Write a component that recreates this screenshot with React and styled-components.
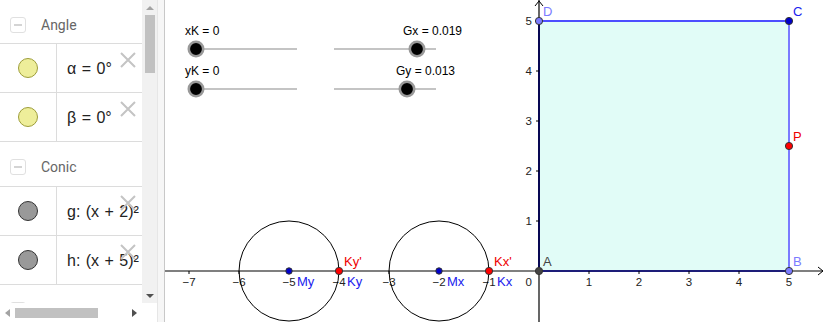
import React from 'react';
import styled, { createGlobalStyle } from 'styled-components';

const GlobalStyle = createGlobalStyle`
  html, body {
    margin: 0;
    padding: 0;
    background: #fff;
    overflow: hidden;
  }
  body {
    font-family: 'Liberation Sans', Arial, sans-serif;
  }
`;

const AppFrame = styled.div`
  display: flex;
  width: 823px;
  height: 322px;
  overflow: hidden;
  background: #fff;
`;

const AlgebraPane = styled.div`
  display: flex;
  flex-direction: column;
  width: 157px;
  height: 322px;
  flex-shrink: 0;
`;

const AlgebraBody = styled.div`
  display: flex;
  height: 303px;
`;

const ItemList = styled.div`
  width: 142px;
  height: 303px;
  overflow: hidden;
`;

const GroupHeader = styled.div`
  display: flex;
  align-items: center;
  gap: 15px;
  height: ${({ h }) => h}px;
  padding-left: 10px;
  box-sizing: border-box;
  border-bottom: 1px solid #dcdcdc;
  color: #666;
  font-family: Roboto, 'Liberation Sans', sans-serif;
  font-size: 14px;
  padding-top: 6px;
`;

const CollapseBox = styled.span`
  display: flex;
  align-items: center;
  justify-content: center;
  width: 14px;
  height: 14px;
  border: 1px solid #e0e0e0;
  border-radius: 3px;

  &::after {
    content: '';
    width: 8px;
    height: 2px;
    background: #d4d4d4;
  }
`;

const ItemRow = styled.div`
  position: relative;
  display: flex;
  height: 49px;
  box-sizing: border-box;
  border-bottom: 1px solid #dcdcdc;
`;

const MarbleCell = styled.div`
  display: flex;
  align-items: center;
  justify-content: center;
  width: 56px;
  flex-shrink: 0;
  border-right: 1px solid #dcdcdc;
`;

const Marble = styled.span`
  width: 18px;
  height: 18px;
  border-radius: 50%;
  background: ${({ fill }) => fill};
  border: 1px solid ${({ edge }) => edge};
`;

const Formula = styled.div`
  flex: 1;
  min-width: 0;
  overflow: hidden;
  display: flex;
  align-items: center;
  padding-left: 10px;
  padding-top: 2px;
  font-family: 'Liberation Sans', Arial, sans-serif;
  font-size: 16px;
  word-spacing: 1px;
  color: #222;
  white-space: nowrap;
`;

const DeleteIcon = styled.svg`
  position: absolute;
  top: 8px;
  right: 6px;
  width: 16px;
  height: 16px;
`;

const VScroll = styled.div`
  display: flex;
  flex-direction: column;
  align-items: center;
  width: 15px;
  background: #f1f1f1;
`;

const Arrow = styled.span`
  width: 0;
  height: 0;
  border-left: ${({ dir }) => (dir === 'up' || dir === 'down' ? '4px solid transparent' : dir === 'right' ? '5px solid #505050' : 'none')};
  border-right: ${({ dir }) => (dir === 'up' || dir === 'down' ? '4px solid transparent' : dir === 'left' ? '5px solid #a3a3a3' : 'none')};
  border-top: ${({ dir }) => (dir === 'left' || dir === 'right' ? '4px solid transparent' : dir === 'down' ? '4px solid #505050' : 'none')};
  border-bottom: ${({ dir }) => (dir === 'left' || dir === 'right' ? '4px solid transparent' : dir === 'up' ? '4px solid #a3a3a3' : 'none')};
`;

const ArrowSlot = styled.div`
  display: flex;
  align-items: center;
  justify-content: center;
  width: 15px;
  height: 15px;
  flex-shrink: 0;
`;

const VThumb = styled.div`
  width: 10px;
  height: 58px;
  background: #c1c1c1;
`;

const VTrack = styled.div`
  flex: 1;
`;

const HScroll = styled.div`
  display: flex;
  align-items: center;
  height: 19px;
  width: 142px;
  background: #fff;
`;

const HThumb = styled.div`
  width: 83px;
  height: 10px;
  background: #c1c1c1;
`;

const HTrack = styled.div`
  flex: 1;
`;

const Divider = styled.div`
  width: 6px;
  flex-shrink: 0;
  background: #f6f6f6;
  border-left: 1px solid #e6e6e6;
  border-right: 1px solid #c8c8c8;
`;

const GraphicsView = styled.div`
  flex: 1;
  height: 322px;
  overflow: hidden;
`;

const groups = [
  {
    name: 'Angle',
    h: 44,
    items: [
      { label: 'α = 0°', fill: '#eeee9a', edge: '#9d9d3a' },
      { label: 'β = 0°', fill: '#eeee9a', edge: '#9d9d3a' },
    ],
  },
  {
    name: 'Conic',
    h: 45,
    items: [
      { label: 'g: (x + 2)² + y² = 1', fill: '#999', edge: '#333' },
      { label: 'h: (x + 5)² + y² = 1', fill: '#999', edge: '#333' },
    ],
  },
  { name: 'Point', h: 45, items: [] },
];

const X0 = 538;
const Y0 = 271;
const U = 50;
const px = (u) => X0 + u * U;
const py = (v) => Y0 - v * U;

const Slider = ({ x1, x2, y, knob, label, lx }) => (
  <g>
    <text x={lx} y={y - 14} fontSize="12" fill="#000">{label}</text>
    <line x1={x1} x2={x2} y1={y} y2={y} stroke="#8a8a8a" strokeWidth="1.2" />
    <circle cx={knob} cy={y} r="7.2" fill="#000" stroke="#999" strokeWidth="2.6" />
  </g>
);

const GPoint = ({ x, y, fill, r = 3.6 }) => (
  <circle cx={x} cy={y} r={r} fill={fill} stroke="#333" strokeWidth="1" />
);

const Graph = () => {
  const ticksX = [-7, -6, -5, -4, -3, -2, -1, 1, 2, 3, 4, 5];
  const ticksY = [1, 2, 3, 4, 5];
  return (
    <svg width="659" height="322" viewBox="164 0 659 322" fontFamily="'Liberation Sans', Arial, sans-serif">
      <rect x={px(0)} y={py(5)} width={5 * U} height={5 * U} fill="#e1fcf7" />
      <line x1={px(0)} y1={py(0)} x2={px(5)} y2={py(0)} stroke="#3a3af0" strokeWidth="2" />
      <line x1={px(5)} y1={py(0)} x2={px(5)} y2={py(5)} stroke="#7a7aff" strokeWidth="2" />
      <line x1={px(5)} y1={py(5)} x2={px(0)} y2={py(5)} stroke="#4d4dff" strokeWidth="2" />
      <line x1={px(0)} y1={py(5)} x2={px(0)} y2={py(0)} stroke="#1414d0" strokeWidth="2" />

      <line x1="164" y1={Y0} x2="822" y2={Y0} stroke="#000" strokeWidth="1.2" />
      <polyline points={`817,${Y0 - 4} 822,${Y0} 817,${Y0 + 4}`} fill="none" stroke="#000" strokeWidth="1" />
      <line x1={X0} y1="0" x2={X0} y2="322" stroke="#000" strokeWidth="1.2" />
      <polyline points={`${X0 - 4},6 ${X0},1 ${X0 + 4},6`} fill="none" stroke="#000" strokeWidth="1" />

      {ticksX.map((t) => (
        <g key={t}>
          <line x1={px(t)} x2={px(t)} y1={Y0} y2={Y0 + 3} stroke="#000" strokeWidth="1" />
          <text x={px(t)} y={Y0 + 15} fontSize="11.5" fill="#222" textAnchor="middle">
            {t < 0 ? `\u2212${-t}` : t}
          </text>
        </g>
      ))}
      {ticksY.map((t) => (
        <g key={t}>
          <line x1={X0 - 3} x2={X0} y1={py(t)} y2={py(t)} stroke="#000" strokeWidth="1" />
          <text x={X0 - 7} y={py(t) + 4} fontSize="11.5" fill="#222" textAnchor="end">{t}</text>
        </g>
      ))}
      <text x={X0 - 7} y={Y0 + 15} fontSize="11.5" fill="#222" textAnchor="end">0</text>

      <circle cx={px(-5)} cy={Y0} r={U} fill="none" stroke="#000" strokeWidth="1" />
      <circle cx={px(-2)} cy={Y0} r={U} fill="none" stroke="#000" strokeWidth="1" />

      <Slider x1={195} x2={296} y={49} knob={195} label="xK = 0" lx={184} />
      <Slider x1={333} x2={435} y={49} knob={416} label="Gx = 0.019" lx={402} />
      <Slider x1={195} x2={296} y={89} knob={195} label="yK = 0" lx={184} />
      <Slider x1={333} x2={435} y={89} knob={406} label="Gy = 0.013" lx={395} />

      <GPoint x={px(-5)} y={Y0} fill="#0000cc" r={3.2} />
      <GPoint x={px(-2)} y={Y0} fill="#0000cc" r={3.2} />
      <GPoint x={px(-4)} y={Y0} fill="#ff0000" />
      <GPoint x={px(-1)} y={Y0} fill="#ff0000" />
      <text x={px(-5) + 8} y={Y0 + 15} fontSize="13" fill="#1a1aee">My</text>
      <text x={px(-2) + 8} y={Y0 + 15} fontSize="13" fill="#1a1aee">Mx</text>
      <text x={px(-4) + 5} y={Y0 - 5} fontSize="13" fill="#ee0000">Ky'</text>
      <text x={px(-4) + 8} y={Y0 + 15} fontSize="13" fill="#1a1aee">Ky</text>
      <text x={px(-1) + 5} y={Y0 - 5} fontSize="13" fill="#ee0000">Kx'</text>
      <text x={px(-1) + 8} y={Y0 + 15} fontSize="13" fill="#1a1aee">Kx</text>

      <GPoint x={px(0)} y={py(0)} fill="#444" />
      <GPoint x={px(5)} y={py(0)} fill="#7b7bff" />
      <GPoint x={px(5)} y={py(5)} fill="#0000cc" />
      <GPoint x={px(0)} y={py(5)} fill="#7b7bff" />
      <GPoint x={px(5)} y={py(2.5)} fill="#ff0000" />
      <text x={px(0) + 4} y={py(0) - 5} fontSize="13" fill="#444">A</text>
      <text x={px(5) + 4} y={py(0) - 5} fontSize="13" fill="#7b7bff">B</text>
      <text x={px(5) + 4} y={py(5) - 5} fontSize="13" fill="#2020ee">C</text>
      <text x={px(0) + 4} y={py(5) - 5} fontSize="13" fill="#7b7bff">D</text>
      <text x={px(5) + 4} y={py(2.5) - 5} fontSize="13" fill="#ee0000">P</text>
    </svg>
  );
};

const App = () => {
  return (
    <>
      <GlobalStyle />
      <AppFrame>
        <AlgebraPane>
          <AlgebraBody>
            <ItemList>
              {groups.map((g) => (
                <React.Fragment key={g.name}>
                  <GroupHeader h={g.h}>
                    <CollapseBox />
                    {g.name}
                  </GroupHeader>
                  {g.items.map((item, i) => (
                    <ItemRow key={i}>
                      <MarbleCell>
                        <Marble fill={item.fill} edge={item.edge} />
                      </MarbleCell>
                      <Formula>{item.label}</Formula>
                      <DeleteIcon viewBox="0 0 16 16">
                        <path d="M1 1L15 15M15 1L1 15" stroke="#c4c4c4" strokeWidth="2" />
                      </DeleteIcon>
                    </ItemRow>
                  ))}
                </React.Fragment>
              ))}
            </ItemList>
            <VScroll>
              <ArrowSlot><Arrow dir="up" /></ArrowSlot>
              <VThumb />
              <VTrack />
              <ArrowSlot><Arrow dir="down" /></ArrowSlot>
            </VScroll>
          </AlgebraBody>
          <HScroll>
            <ArrowSlot><Arrow dir="left" /></ArrowSlot>
            <HThumb />
            <HTrack />
            <ArrowSlot><Arrow dir="right" /></ArrowSlot>
          </HScroll>
        </AlgebraPane>
        <Divider />
        <GraphicsView>
          <Graph />
        </GraphicsView>
      </AppFrame>
    </>
  );
};

export default App;
